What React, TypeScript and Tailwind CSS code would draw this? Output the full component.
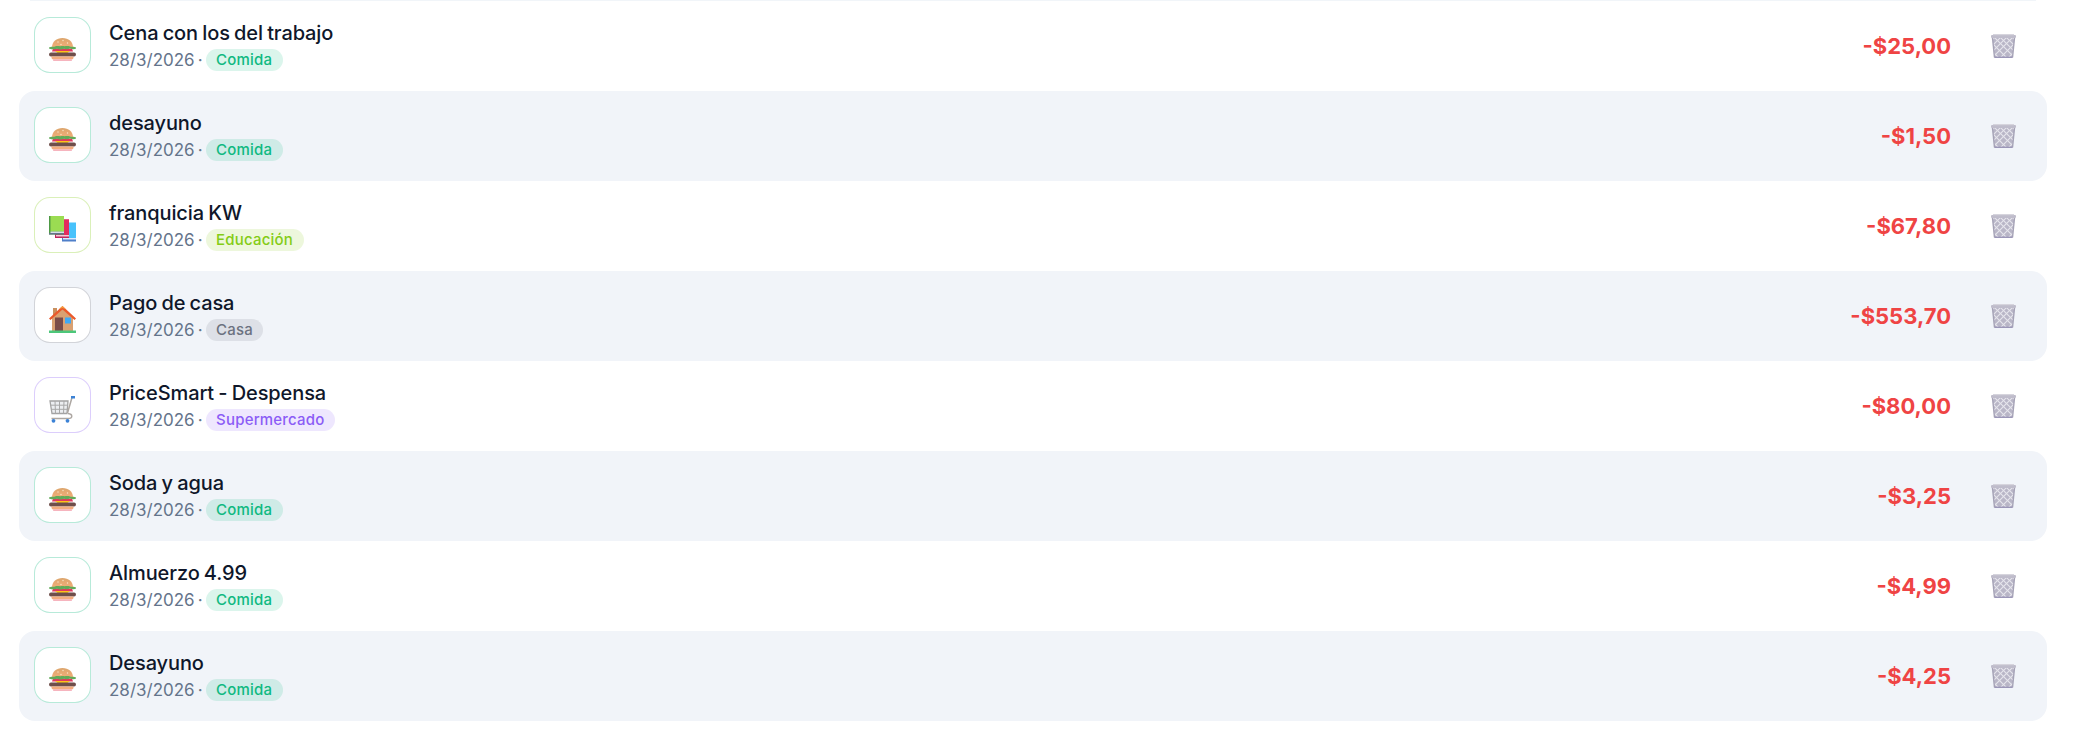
const Burger = () => (
  <svg width="27" height="23" viewBox="0 0 27 23">
    <defs>
      <linearGradient id="bun" x1="0" y1="0" x2="0" y2="1">
        <stop offset="0" stopColor="#dca56c" />
        <stop offset="1" stopColor="#f2ae78" />
      </linearGradient>
    </defs>
    <path d="M3 9.500C3 3.500 7.500 0 13.500 0S24 3.500 24 9.500z" fill="url(#bun)" />
    <circle cx="9" cy="4" r=".7" fill="#fbe6c8" />
    <circle cx="14" cy="2.500" r=".7" fill="#fbe6c8" />
    <circle cx="18.500" cy="5" r=".7" fill="#fbe6c8" />
    <circle cx="12" cy="6.500" r=".7" fill="#fbe6c8" />
    <path d="M4 10.500h19l1 3H3z" fill="#e2395e" />
    <path d="M0 9.500c2-1.500 4-.5 6-1 2-1 4 0 7.500-.5 3 .5 5-.5 7.500.5 2 .5 4-.5 6 1v1c-2 1.500-4 .5-6 0-2 .8-4 1-6 .3-2 .8-5 .8-7 0-3 .8-5 .8-8-.3z" fill="#62aa58" />
    <path d="M6 13h15l-2.500 2h-10z" fill="#fcc419" />
    <rect x="0" y="14.500" width="27" height="4" rx="2" fill="#6f4e4a" />
    <path d="M2.500 18.500h22v1c0 1.500-1 2-2.500 2H5c-1.500 0-2.500-.5-2.500-2z" fill="#f3ac7e" />
    <rect x="4" y="21.200" width="19" height="1.800" rx=".8" fill="#f6b4be" />
  </svg>
);

const Books = () => (
  <svg width="27" height="26" viewBox="0 0 27 26">
    <rect x="13" y="7" width="14" height="18.500" fill="#4f7fc9" />
    <rect x="14.500" y="6.500" width="12.500" height="15.500" fill="#48c2fb" />
    <rect x="14" y="22" width="13" height="1.500" fill="#dbeafe" />
    <rect x="6" y="3.500" width="14" height="18.500" fill="#c0265c" />
    <rect x="8" y="3.500" width="12" height="15.500" fill="#e22b5f" />
    <rect x="7" y="19" width="13" height="1.500" fill="#f8c8d8" />
    <rect x="0" y="0" width="15" height="18.500" fill="#4e9a45" />
    <rect x="1.500" y="0" width="13.500" height="15.500" fill="#9bdc52" />
    <rect x="1.500" y="15.500" width="13.500" height="1.500" fill="#d8dee9" />
    <rect x="0" y="17" width="15" height="1.500" fill="#64748b" />
  </svg>
);

const House = () => (
  <svg width="27" height="27" viewBox="0 0 27 27">
    <rect x="4" y="2" width="4" height="10" fill="#c9905f" />
    <path d="M3 12 13.500 2 24 12v13H3z" fill="#d9a172" />
    <path d="M0 12.500 13.500 0 27 12.500 25.500 14 13.500 3.500 1.500 14z" fill="#ea5a2c" />
    <path d="M10 3 13.500 0 17 3.200 13.500 2z" fill="#f59e3c" />
    <rect x="6" y="11.500" width="8" height="13.500" fill="#7a4c48" />
    <rect x="16" y="11.500" width="6" height="6" fill="#3fa9f5" />
    <rect x="0" y="24.500" width="27" height="2.500" fill="#4cc77a" />
  </svg>
);

const Cart = () => (
  <svg width="27" height="27" viewBox="0 0 27 27">
    <path d="M1 5h18l-1 12.500H3z" fill="#eceef1" stroke="#a3a3a3" strokeWidth="1.300" />
    <path d="M6 5l.5 12.500M10.500 5v12.500M15 5l-.5 12.500M1.500 9.200h17.500M2 13.300h16.500" stroke="#a8a8a8" strokeWidth="1" fill="none" />
    <path d="M19 17.500c5 .5 5 5 0 5H2.500M18.500 17 23 1.500" stroke="#ada7a2" strokeWidth="1.500" fill="none" />
    <rect x="22" y="0" width="4" height="2.500" fill="#3b82d6" />
    <circle cx="4.500" cy="24.800" r="1.900" fill="#3b82d6" />
    <circle cx="18.500" cy="24.800" r="1.900" fill="#3b82d6" />
  </svg>
);

const Trash = () => (
  <svg width="25" height="24" viewBox="0 0 25 24" className="shrink-0">
    <defs>
      <clipPath id="basket">
        <path d="M1.500 3h22L21.500 23h-18z" />
      </clipPath>
    </defs>
    <path d="M1.500 3h22L21.500 23.500h-18z" fill="#b9b6c7" />
    <g clipPath="url(#basket)" stroke="#e6e5ec" strokeWidth="1.100">
      <path d="M-6 10 8 24M-2 6 16 24M2 2 24 24M8 2 28 22M14 2 28 16M20 2 28 10" />
      <path d="M31 10 17 24M27 6 9 24M23 2 1 24M17 2-3 22M11 2-3 16M5 2-3 10" />
    </g>
    <path d="M1.500 4 3.500 23.500" stroke="#a5a2b6" strokeWidth="1.400" />
    <path d="M23.500 4 21.500 23.500" stroke="#a5a2b6" strokeWidth="1.400" />
    <rect x="0" y="1" width="25" height="3" rx="1" fill="#bfbccb" />
    <rect x="2" y="0" width="21" height="1.200" fill="#d6d4dd" />
    <rect x="3.500" y="22.600" width="18" height="1.400" fill="#9b96b8" />
  </svg>
);

const kinds = {
  comida: { icon: <Burger />, label: "Comida", box: "border-[#10b981]/30", pill: "bg-[#10b981]/15 text-[#10b981]" },
  educacion: { icon: <Books />, label: "Educación", box: "border-[#84cc16]/30", pill: "bg-[#84cc16]/15 text-[#84cc16]" },
  casa: { icon: <House />, label: "Casa", box: "border-[#6b7280]/30", pill: "bg-[#6b7280]/15 text-[#6b7280]" },
  super: { icon: <Cart />, label: "Supermercado", box: "border-[#8b5cf6]/30", pill: "bg-[#8b5cf6]/15 text-[#8b5cf6]" },
};

const rows: { title: string; kind: keyof typeof kinds; amount: string }[] = [
  { title: "Cena con los del trabajo", kind: "comida", amount: "-$25,00" },
  { title: "desayuno", kind: "comida", amount: "-$1,50" },
  { title: "franquicia KW", kind: "educacion", amount: "-$67,80" },
  { title: "Pago de casa", kind: "casa", amount: "-$553,70" },
  { title: "PriceSmart - Despensa", kind: "super", amount: "-$80,00" },
  { title: "Soda y agua", kind: "comida", amount: "-$3,25" },
  { title: "Almuerzo 4.99", kind: "comida", amount: "-$4,99" },
  { title: "Desayuno", kind: "comida", amount: "-$4,25" },
];

export default function App() {
  return (
    <div className="min-h-screen bg-white pl-[19px] pr-[32px] font-['Inter',sans-serif]">
      <div className="mx-[11px] h-px bg-[#f1f5f9]" />
      <div className="flex flex-col">
        {rows.map((row, i) => {
          const kind = kinds[row.kind];
          return (
            <div
              key={row.title}
              className={`flex h-[90px] items-center rounded-2xl pl-[15px] pr-[31px] ${i % 2 === 1 ? "bg-[#f1f4f9]" : ""}`}
            >
              <div className={`mb-[2px] flex h-[56px] w-[57px] shrink-0 items-center justify-center rounded-2xl border bg-white pt-[8px] ${kind.box}`}>
                {kind.icon}
              </div>
              <div className="ml-[18px] flex flex-1 flex-col">
                <div className="text-[20px] font-medium leading-[25px] tracking-[-0.1px] [word-spacing:-1px] text-[#0f172a]">{row.title}</div>
                <div className="mt-[2px] flex items-center text-[17px] leading-[24px] text-[#64748b]">
                  <span>28/3/2026</span>
                  <span className="ml-[3px]">·</span>
                  <span className={`ml-[3px] rounded-full px-[10.500px] text-[15px] leading-[22px] tracking-[0.2px] font-medium ${kind.pill}`}>{kind.label}</span>
                </div>
              </div>
              <div className="text-[22px] font-bold text-[#ef4444]">{row.amount}</div>
              <div className="ml-[40px]"><Trash /></div>
            </div>
          );
        })}
      </div>
    </div>
  );
}
